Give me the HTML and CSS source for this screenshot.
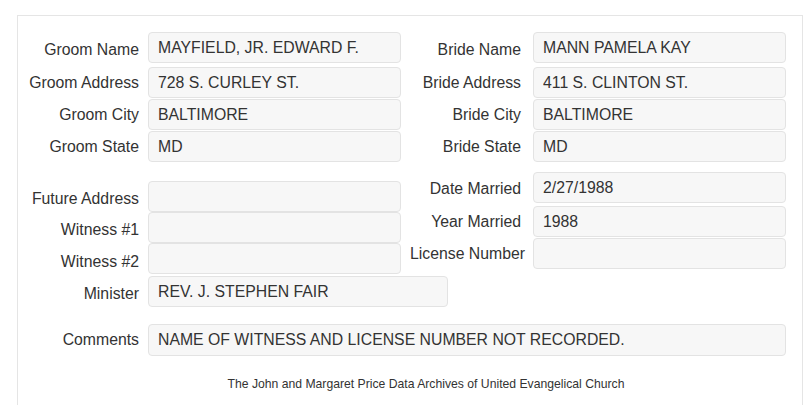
FILE: index.html
```html
<!DOCTYPE html>
<html lang="en">
<head>
    <meta charset="UTF-8">
    <meta name="viewport" content="width=device-width, initial-scale=1.0">
    <title>Marriage Record</title>
    <link rel="stylesheet" href="styles.css">
</head>

<body>
    <div class="page">
        <div class="record">
            <div class="pair-grid">
                <label class="field-label" for="groom-name">Groom Name</label>
                <input class="field" type="text" id="groom-name" value="MAYFIELD, JR. EDWARD F." readonly />
                <label class="field-label wide" for="bride-name">Bride Name</label>
                <input class="field" type="text" id="bride-name" value="MANN PAMELA KAY" readonly />

                <label class="field-label" for="groom-address">Groom Address</label>
                <input class="field" type="text" id="groom-address" value="728 S. CURLEY ST." readonly />
                <label class="field-label wide" for="bride-address">Bride Address</label>
                <input class="field" type="text" id="bride-address" value="411 S. CLINTON ST." readonly />

                <label class="field-label" for="groom-city">Groom City</label>
                <input class="field" type="text" id="groom-city" value="BALTIMORE" readonly />
                <label class="field-label wide" for="bride-city">Bride City</label>
                <input class="field" type="text" id="bride-city" value="BALTIMORE" readonly />

                <label class="field-label" for="groom-state">Groom State</label>
                <input class="field" type="text" id="groom-state" value="MD" readonly />
                <label class="field-label wide" for="bride-state">Bride State</label>
                <input class="field" type="text" id="bride-state" value="MD" readonly />
            </div>

            <div class="lower">
                <div class="lower-left">
                    <label class="field-label" for="future-address">Future Address</label>
                    <input class="field" type="text" id="future-address" value="" readonly />

                    <label class="field-label" for="witness-1">Witness #1</label>
                    <input class="field" type="text" id="witness-1" value="" readonly />

                    <label class="field-label" for="witness-2">Witness #2</label>
                    <input class="field" type="text" id="witness-2" value="" readonly />

                    <label class="field-label" for="minister">Minister</label>
                    <input class="field minister" type="text" id="minister" value="REV. J. STEPHEN FAIR" readonly />
                </div>

                <div class="lower-right">
                    <label class="field-label wide" for="date-married">Date Married</label>
                    <input class="field" type="text" id="date-married" value="2/27/1988" readonly />

                    <label class="field-label wide" for="year-married">Year Married</label>
                    <input class="field" type="text" id="year-married" value="1988" readonly />

                    <label class="field-label wide long" for="license-number">License Number</label>
                    <input class="field" type="text" id="license-number" value="" readonly />
                </div>
            </div>

            <div class="comments-row">
                <label class="field-label" for="comments">Comments</label>
                <input class="field" type="text" id="comments" value="NAME OF WITNESS AND LICENSE NUMBER NOT RECORDED." readonly />
            </div>

            <p class="archive-note">The John and Margaret Price Data Archives of United Evangelical Church</p>
        </div>
    </div>
</body>
</html>
```

FILE: styles.css
```css
body {
    margin: 0;
    font-family: "Liberation Sans", Arial, sans-serif;
    font-size: 15.8px;
    color: #333;
    background-color: #fff;
}
.page {
    padding: 15px 2px 0 17px;
}
.record {
    box-sizing: border-box;
    border: 1px solid #e5e5e5;
    border-bottom: none;
    padding: 16px 16px 0 0;
    min-height: 390px;
}
.pair-grid {
    display: grid;
    grid-template-columns: 130px 253px 132px 253px;
    grid-template-rows: 35px 32px 32px 31px;
}
.field-label {
    text-align: right;
    padding-right: 9px;
    align-self: center;
    white-space: nowrap;
}
.field-label.wide {
    padding-right: 12px;
}
.field-label.long {
    margin-right: -4px;
}
.field {
    height: 31px;
    width: 100%;
    box-sizing: border-box;
    border: 1px solid #e3e3e3;
    border-radius: 4px;
    background-color: #f7f7f7;
    padding: 0 9px;
    font: inherit;
    color: #333;
    align-self: start;
    outline: none;
}
.lower {
    display: grid;
    grid-template-columns: 383px 385px;
    margin-top: 10px;
}
.lower-left {
    display: grid;
    grid-template-columns: 130px 253px;
    grid-template-rows: 31px 31px 33px 31px;
    padding-top: 9px;
}
.lower-left .field-label {
    margin-top: 4px;
}
.field.minister {
    width: 300px;
}
.lower-right {
    display: grid;
    grid-template-columns: 132px 253px;
    grid-template-rows: 34px 32px 31px;
    align-self: start;
}
.comments-row {
    display: grid;
    grid-template-columns: 130px 638px;
    margin-top: 17px;
}
.comments-row .field {
    height: 32px;
}
.archive-note {
    margin: 20px 0 0 0;
    padding-left: 48px;
    text-align: center;
    font-size: 12.2px;
    line-height: 17px;
}
```
